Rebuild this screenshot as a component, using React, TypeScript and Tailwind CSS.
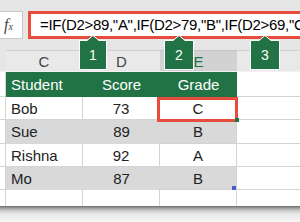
import React from 'react';

type Row = { name: string; score: string; grade: string; shaded: boolean; h: string };

const rows: Row[] = [
  { name: 'Bob', score: '73', grade: 'C', shaded: false, h: 'h-[23px]' },
  { name: 'Sue', score: '89', grade: 'B', shaded: true, h: 'h-[24px]' },
  { name: 'Rishna', score: '92', grade: 'A', shaded: false, h: 'h-[23px]' },
  { name: 'Mo', score: '87', grade: 'B', shaded: true, h: 'h-[23px]' },
];

// numbered callout with a little notch on top
function Callout({ n, className, w }: { n: string; className: string; w: number }) {
  const mid = w / 2;
  return (
    <div className={`absolute top-[35px] h-[35px] ${className}`}>
      <svg width={w} height={35} viewBox={`0 0 ${w} 35`} className="absolute inset-0">
        <path
          d={`M0.5 5.5 H${mid - 6} L${mid} 0.5 L${mid + 6} 5.5 H${w - 0.5} V34.5 H0.5 Z`}
          fill="#217346"
          stroke="#ffffff"
          strokeWidth={1}
        />
      </svg>
      <div className="absolute left-0 right-0 top-[5px] bottom-0 flex items-center justify-center text-white text-[14px] leading-none">
        {n}
      </div>
    </div>
  );
}

export default function App() {
  return (
    <div className="relative w-[300px] h-[222px] overflow-hidden bg-white font-['Liberation_Sans',Arial,sans-serif]">
      {/* formula bar */}
      <div className="h-[50px] bg-[#e6e6e6] pt-[11px] flex items-start">
        <div className="w-[23px] h-[28px] bg-white border border-l-0 border-[#c8c8c8] flex items-center pl-[4px]">
          <span className="font-['Liberation_Serif',serif] italic text-[#444] text-[16px] leading-none">
            f<span className="text-[10px]">x</span>
          </span>
        </div>
        <div className="ml-[5px] flex-1 h-[28px] bg-white border-[3px] border-r-0 border-[#e84c3c] pl-[9px] overflow-hidden whitespace-nowrap text-[15px] tracking-[-0.3px] leading-[22px] text-black">
          =IF(D2&gt;89,"A",IF(D2&gt;79,"B",IF(D2&gt;69,"C"
        </div>
      </div>

      {/* column headers */}
      <div className="flex h-[22px] border-b border-[#f2f2f2] bg-[#e6e6e6] text-[15px] leading-none text-[#444]">
        <div className="w-[6px]" />
        <div className="w-[77px] border-t border-r border-[#d0d0d0] bg-[#e9e9e9] flex items-center justify-center">C</div>
        <div className="w-[77px] border-t border-[#d0d0d0] bg-[#e9e9e9] flex items-center justify-center">D</div>
        <div className="w-[77px] border-t border-[#c4c4c4] bg-[#d2d2d2] flex items-center justify-center text-[#217346]">E</div>
        <div className="flex-1 border-t border-[#d0d0d0] bg-[#e9e9e9]" />
      </div>

      {/* table header */}
      <div className="flex h-[25px] text-[15px] leading-none">
        <div className="w-[6px] border-r border-b border-[#d4d4d4]" />
        <div className="w-[77px] bg-[#217346] text-white flex items-center pl-[5px]">Student</div>
        <div className="w-[77px] bg-[#217346] text-white flex items-center justify-center">Score</div>
        <div className="w-[77px] bg-[#217346] text-white flex items-center justify-center">Grade</div>
        <div className="flex-1 border-b border-[#d4d4d4]" />
      </div>

      {rows.map((r) => (
        <div key={r.name} className={`flex ${r.h} text-[15px] leading-none text-[#222]`}>
          <div className="w-[6px] border-r border-b border-[#d4d4d4]" />
          <div className={`w-[77px] border-b flex items-center pl-[5px] ${r.shaded ? 'bg-[#d9d9d9] border-[#d9d9d9]' : 'border-r border-[#d4d4d4]'}`}>
            {r.name}
          </div>
          <div className={`w-[77px] border-b flex items-center justify-center ${r.shaded ? 'bg-[#d9d9d9] border-[#d9d9d9]' : 'border-r border-[#d4d4d4]'}`}>
            {r.score}
          </div>
          <div className={`w-[77px] border-r border-b border-[#d4d4d4] flex items-center justify-center ${r.shaded ? 'bg-[#d9d9d9]' : ''}`}>
            {r.grade}
          </div>
          <div className="flex-1 border-b border-[#d4d4d4]" />
        </div>
      ))}

      {/* empty row */}
      <div className="flex h-[16px]">
        <div className="w-[6px] border-r border-[#d4d4d4]" />
        <div className="w-[77px] border-r border-[#d4d4d4]" />
        <div className="w-[77px] border-r border-[#d4d4d4]" />
        <div className="w-[77px] border-r border-[#d4d4d4]" />
        <div className="flex-1" />
      </div>

      {/* bottom edge shadow */}
      <div className="h-[16px] bg-[linear-gradient(to_bottom,#6e6e6e_0px,#c4c4c4_4px,#e8e8e8_8px,#f7f7f7_16px)]" />

      {/* selected cell */}
      <div className="absolute left-[157px] top-[97px] w-[81px] h-[25px] border-[3px] border-[#e84c3c]" />
      <div className="absolute left-[235px] top-[118px] w-[4px] h-[4px] bg-[#217346]" />
      {/* table resize handle */}
      <div className="absolute left-[232px] top-[186px] w-[4px] h-[4px] bg-[#4a5fc4]" />

      <Callout n="1" w={28} className="left-[79px] w-[28px]" />
      <Callout n="2" w={30} className="left-[164px] w-[30px]" />
      <Callout n="3" w={30} className="left-[250px] w-[30px]" />
    </div>
  );
}
